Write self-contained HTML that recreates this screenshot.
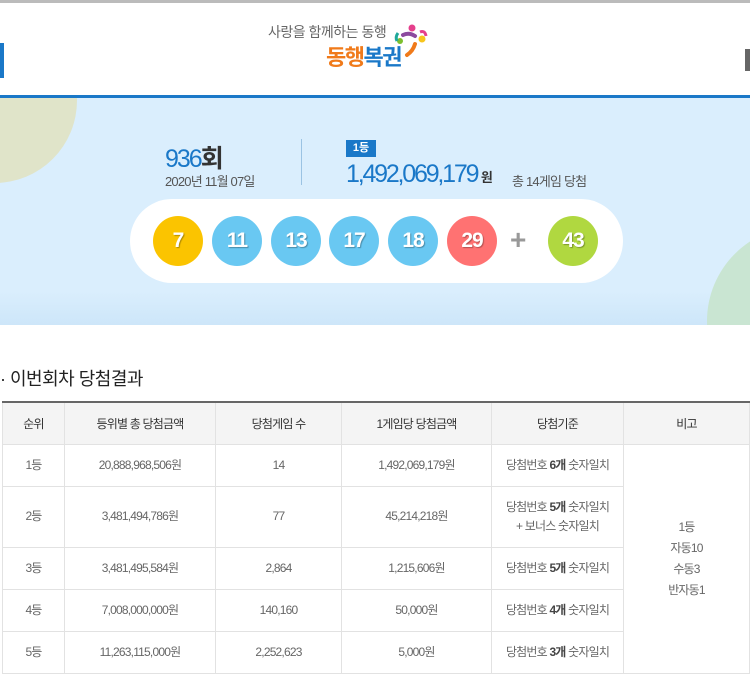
<!DOCTYPE html>
<html><head><meta charset="utf-8"><style>
*{margin:0;padding:0;box-sizing:border-box}
body{width:750px;height:675px;overflow:hidden;background:#fff;font-family:"Liberation Sans","Noto Sans CJK KR",sans-serif;position:relative}
.hdr{position:absolute;left:0;top:0;width:750px;height:95px;border-top:3px solid #bbb;background:#fff}
.band{position:absolute;left:0;top:95px;width:750px;height:230px;border-top:3px solid #1a78c8;background:linear-gradient(#daeefd 0,#daeefd 85%,#cde6f9 100%);overflow:hidden}
.ball{position:absolute;top:216px;width:50px;height:50px;border-radius:50%;color:#fff;font-size:21px;font-weight:bold;text-align:center;line-height:50px;text-shadow:1px 1px 1px rgba(0,0,0,.3);letter-spacing:-1px}
table{position:absolute;left:2px;top:401px;width:748px;border-collapse:collapse;font-size:12px;color:#666;letter-spacing:-.8px}
td,th{border:1px solid #e2e2e2;text-align:center;font-weight:normal}
th{background:#f4f4f4;height:42px;border-top:2px solid #666;color:#333}
td{height:42px;line-height:19px}
td b{font-weight:bold;color:#444}
</style></head><body>
<div class="hdr">
<div style="position:absolute;left:0;top:40px;width:4px;height:35px;background:#1a78c8"></div>
<div style="position:absolute;right:0;top:46px;width:5px;height:22px;background:#666"></div>
<div style="position:absolute;left:268px;top:19px;font-size:14px;color:#666;letter-spacing:-.5px">사랑을 함께하는 동행</div>
<div style="position:absolute;left:326px;top:37px;font-size:22px;font-weight:bold;letter-spacing:-1.5px"><span style="color:#f07a1a">동행</span><span style="color:#1a78c8">복권</span></div>
<svg style="position:absolute;left:393px;top:20px" width="36" height="36" viewBox="0 0 36 36">
<circle cx="19" cy="5" r="3.5" fill="#e53f8c"/><path d="M10 12 Q16 9 22 13" stroke="#8c4a9e" stroke-width="4" fill="none" stroke-linecap="round"/>
<circle cx="7" cy="18" r="3" fill="#7cbf2f"/><path d="M5 10 Q2 14 4 18" stroke="#1fa89a" stroke-width="3" fill="none"/>
<circle cx="29" cy="16" r="3.5" fill="#f7c51c"/><path d="M27 9 Q32 7 33 13" stroke="#e53f8c" stroke-width="3" fill="none"/>
<path d="M22 21 Q20 28 14 32" stroke="#f07a1a" stroke-width="4" fill="none" stroke-linecap="round"/></svg>
</div>
<div class="band">
<div style="position:absolute;left:-88px;top:-80px;width:165px;height:165px;border-radius:50%;background:#e0e4c9"></div>
<div style="position:absolute;left:707px;top:128px;width:190px;height:190px;border-radius:50%;background:#c9e5d2"></div>
</div>
<div style="position:absolute;left:165px;top:139px;font-size:25px;color:#1a78c8;letter-spacing:-2px">936<span style="color:#333;font-weight:bold">회</span></div>
<div style="position:absolute;left:165px;top:171px;font-size:13px;color:#555;letter-spacing:-.8px">2020년 11월 07일</div>
<div style="position:absolute;left:301px;top:139px;width:1px;height:46px;background:#9bc3e3"></div>
<div style="position:absolute;left:346px;top:140px;width:30px;height:17px;background:#1a78c8;color:#fff;font-size:11px;font-weight:bold;text-align:center;line-height:17px">1등</div>
<div style="position:absolute;left:346px;top:160px;font-size:25px;color:#1a78c8;letter-spacing:-2.2px">1,492,069,179<span style="font-size:13px;color:#333;font-weight:bold;letter-spacing:0"> 원</span></div>
<div style="position:absolute;left:512px;top:171px;font-size:13px;color:#555;letter-spacing:-.8px">총 14게임 당첨</div>
<div style="position:absolute;left:130px;top:199px;width:493px;height:84px;border-radius:42px;background:#fff"></div>
<div class="ball" style="left:153px;background:#fbc400">7</div>
<div class="ball" style="left:212px;background:#69c8f2">11</div>
<div class="ball" style="left:271px;background:#69c8f2">13</div>
<div class="ball" style="left:329px;background:#69c8f2">17</div>
<div class="ball" style="left:388px;background:#69c8f2">18</div>
<div class="ball" style="left:447px;background:#ff7272">29</div>
<div style="position:absolute;left:510px;top:224px;font-size:28px;color:#999;font-weight:bold">+</div>
<div class="ball" style="left:548px;background:#b0d840">43</div>
<div style="position:absolute;left:0;top:365px;font-size:18px;color:#222;letter-spacing:-.5px">· 이번회차 당첨결과</div>
<table>
<tr><th style="width:62px">순위</th><th style="width:151px">등위별 총 당첨금액</th><th style="width:126px">당첨게임 수</th><th style="width:150px">1게임당 당첨금액</th><th style="width:132px">당첨기준</th><th>비고</th></tr>
<tr><td>1등</td><td>20,888,968,506원</td><td>14</td><td>1,492,069,179원</td><td>당첨번호 <b>6개</b> 숫자일치</td><td rowspan="5" style="line-height:21px;vertical-align:middle">1등<br>자동10<br>수동3<br>반자동1</td></tr>
<tr><td style="height:61px">2등</td><td>3,481,494,786원</td><td>77</td><td>45,214,218원</td><td>당첨번호 <b>5개</b> 숫자일치<br>+ 보너스 숫자일치</td></tr>
<tr><td>3등</td><td>3,481,495,584원</td><td>2,864</td><td>1,215,606원</td><td>당첨번호 <b>5개</b> 숫자일치</td></tr>
<tr><td>4등</td><td>7,008,000,000원</td><td>140,160</td><td>50,000원</td><td>당첨번호 <b>4개</b> 숫자일치</td></tr>
<tr><td>5등</td><td>11,263,115,000원</td><td>2,252,623</td><td>5,000원</td><td>당첨번호 <b>3개</b> 숫자일치</td></tr>
</table>
</body></html>
